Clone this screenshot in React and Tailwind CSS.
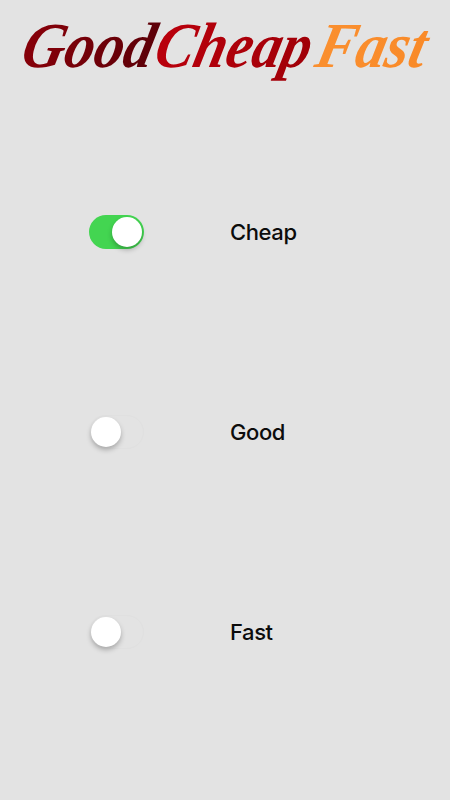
import React from 'react';

const WORDS = [
  { text: 'Good', x: 19, width: 131, from: '#850009', to: '#5c0008' },
  { text: 'Cheap', x: 152, width: 155, from: '#b8000c', to: '#a00008' },
  { text: 'Fast', x: 313, width: 109, from: '#fa8f2f', to: '#f98a28' },
];

const OPTIONS = [
  { label: 'Cheap', on: true },
  { label: 'Good', on: false },
  { label: 'Fast', on: false },
];

function Logo() {
  return (
    <svg width="450" height="100" viewBox="0 0 450 100" className="block shrink-0" role="img" aria-label="GoodCheapFast">
      <defs>
        {WORDS.map(({ text, from, to }) => (
          <linearGradient key={text} id={`logo-${text}`}>
            <stop offset="0.1" stopColor={from} />
            <stop offset="1" stopColor={to} />
          </linearGradient>
        ))}
      </defs>
      {WORDS.map(({ text, x, width }) => (
        <text
          key={text}
          transform={`translate(${x} 67) skewX(-13)`}
          textLength={width}
          lengthAdjust="spacingAndGlyphs"
          fill={`url(#logo-${text})`}
          className="font-['Liberation_Serif',serif] text-[64px] font-bold italic"
        >
          {text}
        </text>
      ))}
    </svg>
  );
}

function Switch({ on }) {
  return (
    <button
      role="switch"
      aria-checked={on}
      className={`flex h-[34px] w-[55px] items-center rounded-full ${on ? 'justify-end bg-[#43d551] pr-[2px]' : 'justify-start border border-[#e0e0e0] pl-px'}`}
    >
      <span className="size-[30px] rounded-full bg-white shadow-[0_3px_5px_rgba(0,0,0,0.25)]" />
    </button>
  );
}

function App() {
  return (
    <div className="flex h-[800px] w-[450px] flex-col overflow-hidden bg-[#e3e3e3]">
      <Logo />
      <div className="flex flex-col pt-8">
        {OPTIONS.map(({ label, on }) => (
          <div key={label} className="flex h-[200px] items-center pl-[89px]">
            <Switch on={on} />
            <span className="ml-[86px] pt-px font-['Inter',sans-serif] text-[22px] font-medium tracking-[-0.4px] text-[#0c0c0c]">{label}</span>
          </div>
        ))}
      </div>
    </div>
  );
}

export default App;
